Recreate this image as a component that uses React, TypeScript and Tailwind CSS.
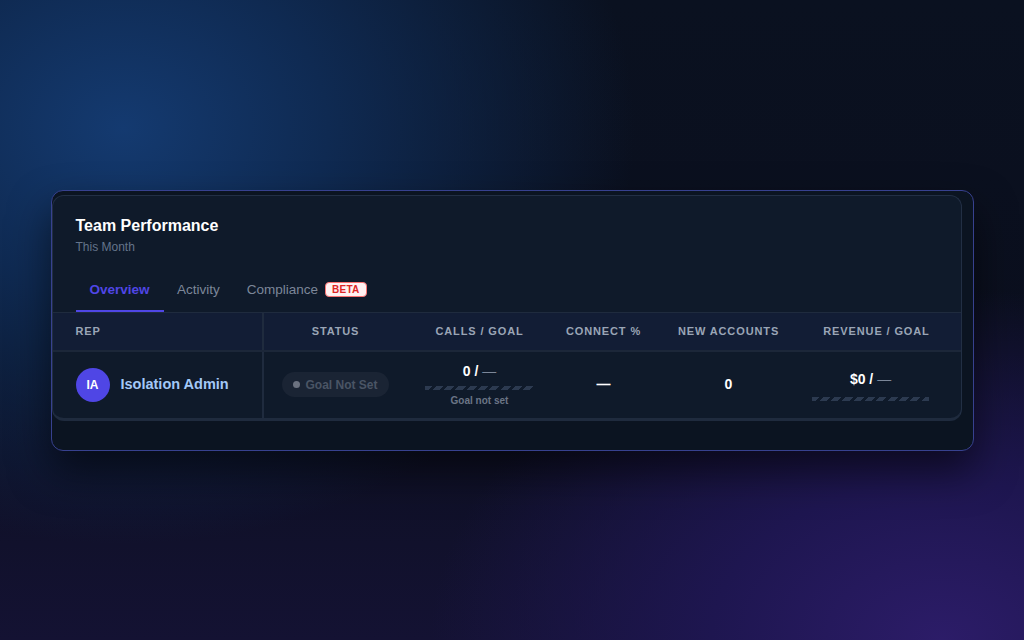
import React from "react";

const stripe =
  "h-[4px] bg-[repeating-linear-gradient(135deg,#2c3a50_0px,#2c3a50_5px,transparent_5px,transparent_8px)]";

export default function App() {
  return (
    <div
      className="w-[1024px] h-[640px] flex items-center justify-center overflow-hidden bg-[radial-gradient(ellipse_50%_65%_at_12%_20%,#143a70_0%,#0f2a52_40%,transparent_100%),radial-gradient(ellipse_50%_55%_at_92%_100%,#2c1c68_0%,#1e1650_45%,transparent_100%),linear-gradient(180deg,#0a1120_0%,#0b0f1e_55%,#141233_100%)]"
      style={{ fontFamily: "'Liberation Sans', Arial, sans-serif" }}
    >
      <div className="w-[923px] h-[261px] rounded-xl border border-[#37418f] bg-[#0b1421] shadow-[0_20px_40px_rgba(0,0,0,0.55)] pt-[4px] pr-[11px] flex flex-col">
        <div className="rounded-xl border border-[#222f44] border-b-[3px] border-b-[#1f2b3e] bg-[#0f1a2a] overflow-hidden">
          {/* Header */}
          <div className="px-[23px] pt-[20px]">
            <div className="text-[16px] font-bold text-white leading-5">Team Performance</div>
            <div className="text-[12px] text-[#64748b] mt-[3px] leading-4">This Month</div>
          </div>
          {/* Tabs */}
          <div className="flex items-end px-[23px] mt-[27px]">
            <div className="px-[14px] pb-[12px] border-b-2 border-[#4f46e5] text-[13.5px] font-bold text-[#5046e6] leading-4">
              Overview
            </div>
            <div className="px-[13.5px] pb-[12px] border-b-2 border-transparent text-[13.5px] text-[#7c8799] leading-4">
              Activity
            </div>
            <div className="px-[13.5px] pb-[12px] border-b-2 border-transparent text-[13.5px] text-[#7c8799] leading-4 flex items-center gap-[7px]">
              <span>Compliance</span>
              <span className="text-[10px] font-bold text-[#dc2626] bg-[#fff1f1] border border-[#f87171] rounded-[4px] px-[6px] leading-[13px] tracking-wide">
                BETA
              </span>
            </div>
          </div>
          {/* Table header */}
          <div className="flex border-t border-[#1f2b3e] bg-[#14203a]/70 h-[38px] text-[11px] font-bold tracking-[0.08em] text-[#9aa5b6] uppercase">
            <div className="w-[211px] pl-[23px] flex items-center border-r-2 border-[#1f2b3e]">Rep</div>
            <div className="w-[144px] flex items-center justify-center">Status</div>
            <div className="w-[144px] flex items-center justify-center">Calls / Goal</div>
            <div className="w-[104px] flex items-center justify-center">Connect %</div>
            <div className="w-[146px] flex items-center justify-center">New Accounts</div>
            <div className="w-[150px] flex items-center justify-center">Revenue / Goal</div>
          </div>
          {/* Row */}
          <div className="flex border-t-2 border-[#1c2739] h-[68px]">
            <div className="w-[211px] pl-[23px] flex items-center gap-[11px] border-r-2 border-[#1f2b3e]">
              <div className="w-[34px] h-[34px] rounded-full bg-[#4f46e5] flex items-center justify-center text-[12px] font-bold text-white">
                IA
              </div>
              <span className="text-[14.5px] font-bold text-[#a3c8f7]">Isolation Admin</span>
            </div>
            <div className="w-[144px] flex items-center justify-center">
              <div className="flex items-center gap-[5px] rounded-full bg-[#1a2434] px-[11px] h-[25px] text-[12px] font-bold text-[#4a5565]">
                <span className="w-[7px] h-[7px] rounded-full bg-[#6b7280]" />
                Goal Not Set
              </div>
            </div>
            <div className="w-[144px] flex flex-col items-center justify-center">
              <div className="text-[14px] font-bold text-white leading-4">
                0 / <span className="text-[#7c8799] font-normal">—</span>
              </div>
              <div className={`w-[109px] mt-[7px] ${stripe}`} />
              <div className="text-[10px] font-bold text-[#6b7586] mt-[5px] leading-3">Goal not set</div>
            </div>
            <div className="w-[104px] flex items-center justify-center text-[14px] font-bold text-white">—</div>
            <div className="w-[146px] flex items-center justify-center text-[14px] font-bold text-white">0</div>
            <div className="w-[150px] flex flex-col items-center justify-center pt-[2px] pr-[12px]">
              <div className="text-[14px] font-bold text-white leading-4">
                $0 / <span className="text-[#7c8799] font-normal">—</span>
              </div>
              <div className={`w-[117px] mt-[10px] ${stripe}`} />
            </div>
          </div>
        </div>
      </div>
    </div>
  );
}
